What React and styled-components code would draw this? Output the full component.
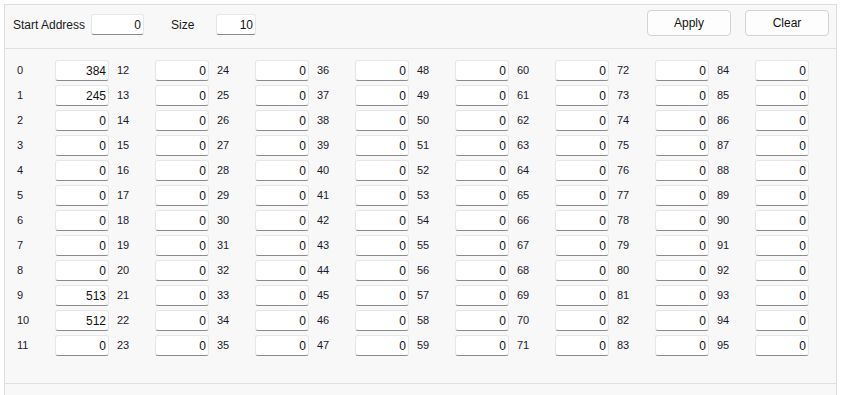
import React from "react";
import styled, { createGlobalStyle } from "styled-components";

const GlobalStyle = createGlobalStyle`
  html, body {
    margin: 0;
    padding: 0;
    background: #ffffff;
    overflow: hidden;
  }
  body {
    font-family: "Segoe UI", "Liberation Sans", Arial, sans-serif;
  }
`;

const Page = styled.div`
  padding: 4px 0 0 4px;
  width: 843px;
  height: 395px;
  box-sizing: border-box;
`;

const Panel = styled.div`
  width: 833px;
  height: 400px;
  box-sizing: border-box;
  border: 1px solid #dedede;
  background: #f8f8f8;
  display: flex;
  flex-direction: column;
`;

const Header = styled.div`
  height: 44px;
  box-sizing: border-box;
  border-bottom: 1px solid #e0e0e0;
  display: flex;
  align-items: flex-start;
  padding: 5px 7px 0 8px;
`;

const Field = styled.div`
  display: flex;
  align-items: center;
  margin-top: 4px;
  margin-right: ${(p) => p.$after || 0}px;
`;

const Caption = styled.span`
  width: ${(p) => p.$w}px;
  font-size: 12px;
  color: #1a1a1a;
`;

const Box = styled.input`
  width: ${(p) => p.$w || 54}px;
  height: 21px;
  box-sizing: border-box;
  border: 1px solid #e6e6e6;
  border-bottom: 1px solid #8b8b8b;
  border-radius: 3px;
  background: #ffffff;
  text-align: right;
  padding: 0 2px 0 0;
  margin: 0;
  font-family: "Segoe UI", "Liberation Sans", Arial, sans-serif;
  font-size: 12px;
  color: #111;
  outline: none;
`;

const Spacer = styled.div`
  flex: 1;
`;

const Buttons = styled.div`
  display: flex;
  gap: 14px;
`;

const Button = styled.button`
  width: 84px;
  height: 26px;
  box-sizing: border-box;
  border: 1px solid #d2d2d2;
  border-radius: 4px;
  background: #fdfdfd;
  font-family: "Segoe UI", "Liberation Sans", Arial, sans-serif;
  font-size: 12px;
  color: #111;
  padding: 0;
`;

const Grid = styled.div`
  height: 335px;
  box-sizing: border-box;
  padding: 11px 0 0 12px;
  border-bottom: 1px solid #e0e0e0;
  display: grid;
  grid-template-columns: repeat(8, 100px);
  grid-template-rows: repeat(12, 25px);
  grid-auto-flow: column;
  align-content: start;
`;

const Cell = styled.div`
  display: flex;
  align-items: flex-start;
`;

const Index = styled.span`
  width: 38px;
  line-height: 21px;
  font-size: 11px;
  color: #1a1a2c;
`;

const Footer = styled.div`
  flex: 1;
`;

const firstColumn = [384, 245, 0, 0, 0, 0, 0, 0, 0, 513, 512, 0];
const values = Array.from({ length: 96 }, (_, i) => (i < 12 ? firstColumn[i] : 0));

export default function App() {
  return (
    <Page>
      <GlobalStyle />
      <Panel>
        <Header>
          <Field $after={27}>
            <Caption $w={78}>Start Address</Caption>
            <Box $w={53} defaultValue="0" />
          </Field>
          <Field>
            <Caption $w={45}>Size</Caption>
            <Box $w={40} defaultValue="10" />
          </Field>
          <Spacer />
          <Buttons>
            <Button>Apply</Button>
            <Button>Clear</Button>
          </Buttons>
        </Header>
        <Grid>
          {values.map((v, i) => (
            <Cell key={i}>
              <Index>{i}</Index>
              <Box defaultValue={String(v)} />
            </Cell>
          ))}
        </Grid>
        <Footer />
      </Panel>
    </Page>
  );
}
